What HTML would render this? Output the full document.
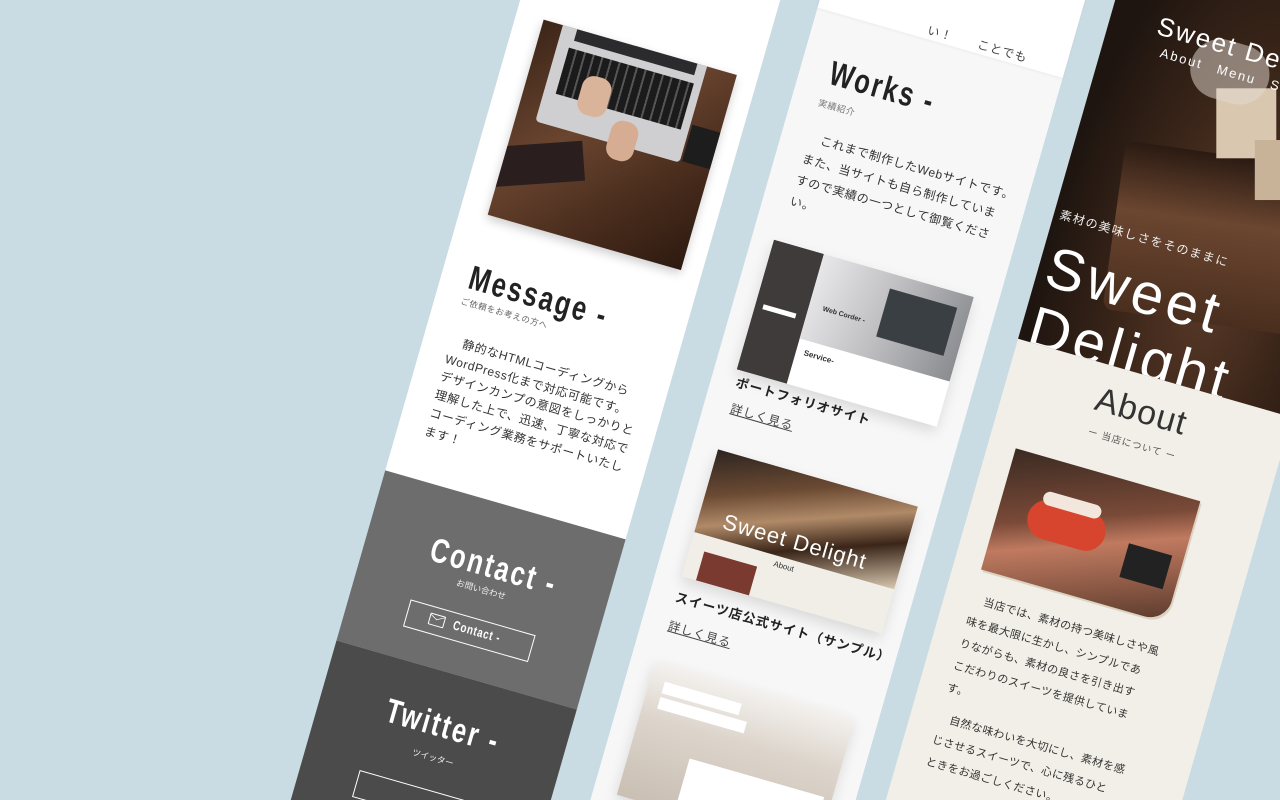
<!DOCTYPE html>
<html><head><meta charset="utf-8">
<style>
html,body{margin:0;padding:0;width:1280px;height:800px;overflow:hidden}
body{background:#c9dbe3;position:relative;font-family:"Liberation Sans","Noto Sans CJK JP",sans-serif}
#clip{position:absolute;left:0;top:0;width:1280px;height:800px;overflow:hidden}
#w{position:absolute;left:0;top:0;width:0;height:0;transform:rotate(16deg);transform-origin:0 0}
#w div,#w span{position:absolute;white-space:nowrap}
.h{font-family:"Liberation Sans Narrow","Liberation Sans",sans-serif;font-size:34px;letter-spacing:3px;line-height:1;transform:scaleX(.75);transform-origin:0 0;font-weight:bold}
.hc{transform-origin:50% 0}
.p{font-size:12px;line-height:18.7px;letter-spacing:.6px;color:#333}
.c{text-align:center}
</style></head><body>
<div id="clip">
<div id="w">
 <!-- strip 1 -->
 <div style="left:500px;top:-500px;width:250px;height:846px;background:#fff"></div>
 <div style="left:500px;top:-500px;width:250px;height:285px;background:#fafafa"></div>
 <div style="left:500px;top:346px;width:250px;height:177px;background:#6d6d6d"></div>
 <div style="left:500px;top:523px;width:250px;height:400px;background:#4b4b4b"></div>
 <div style="left:528px;top:-131px;width:201px;height:203px;background:linear-gradient(135deg,#3c2518,#6a4530 40%,#4a2d1d 70%,#2d1a10);box-shadow:0 4px 10px rgba(0,0,0,.2);overflow:hidden">
  <div style="left:20px;top:-10px;width:150px;height:110px;background:#cfcfd1;border-radius:4px"></div>
  <div style="left:35px;top:-10px;width:125px;height:22px;background:#2b2b2e"></div>
  <div style="left:32px;top:20px;width:130px;height:48px;background:repeating-linear-gradient(90deg,#1b1b1b 0 7px,#555 7px 9px)"></div>
  <div style="left:55px;top:40px;width:30px;height:40px;background:#d9b49a;border-radius:12px"></div>
  <div style="left:95px;top:75px;width:28px;height:40px;background:#d6ad93;border-radius:12px"></div>
  <div style="left:-10px;top:120px;width:90px;height:40px;background:#2a1e1e;transform:rotate(-20deg)"></div>
  <div style="left:172px;top:60px;width:30px;height:38px;background:#1d1d1d"></div>
 </div>
 <div class="h" style="left:528px;top:120px;color:#222">Message -</div>
 <div style="left:526px;top:156px;font-size:8.5px;color:#666;letter-spacing:.5px">ご依頼をお考えの方へ</div>
 <div class="p" style="left:527px;top:194px">　静的なHTMLコーディングから<br>WordPress化まで対応可能です。<br>デザインカンプの意図をしっかりと<br>理解した上で、迅速、丁寧な対応で<br>コーディング業務をサポートいたし<br>ます！</div>
 <div class="h c hc" style="left:500px;top:392px;width:262px;color:#fff">Contact -</div>
 <div class="c" style="left:500px;top:428px;width:250px;font-size:8.5px;color:#eee">お問い合わせ</div>
 <div style="left:560px;top:463px;width:128px;height:26px;border:1px solid #fff"></div>
 <div style="left:583px;top:470px;width:14px;height:10px;border:1.5px solid #fff;border-radius:1px"></div>
 <div style="left:585px;top:466px;width:10px;height:10px;border-right:1.5px solid #fff;border-bottom:1.5px solid #fff;transform:scaleY(.55) rotate(45deg)"></div>
 <div class="h" style="left:608px;top:469px;font-size:13px;letter-spacing:1px;color:#fff">Contact -</div>
 <div class="h c hc" style="left:495px;top:559px;width:262px;color:#fff">Twitter -</div>
 <div class="c" style="left:500px;top:603px;width:250px;font-size:8.5px;color:#eee">ツイッター</div>
 <div style="left:558px;top:641px;width:128px;height:26px;border:1px solid #fff"></div>
 <!-- strip 2 -->
 <div style="left:788px;top:-500px;width:255px;height:1400px;background:#f7f7f7"></div>
 <div style="left:788px;top:-500px;width:255px;height:282px;background:#fff;box-shadow:0 1px 3px rgba(0,0,0,.05)"></div>
 <div style="left:900px;top:-236px;font-size:12px;color:#444;letter-spacing:1px">い！　　ことでも</div>
 <div class="h" style="left:818px;top:-176px;color:#222">Works -</div>
 <div style="left:815px;top:-134px;font-size:9px;color:#777;letter-spacing:.5px">実績紹介</div>
 <div class="p" style="left:815px;top:-102px;font-size:12px;line-height:22px">　これまで制作したWebサイトです。<br>また、当サイトも自ら制作していま<br>すので実績の一つとして御覧くださ<br>い。</div>
 <div style="left:810px;top:17px;width:208px;height:135px;background:#fff;box-shadow:0 6px 14px rgba(0,0,0,.12);overflow:hidden">
  <div style="left:0;top:0;width:52px;height:135px;background:#3e3b3a"></div>
  <div style="left:52px;top:0;width:156px;height:88px;background:linear-gradient(100deg,#e8e8ea,#bdbdc0 50%,#8a8c90)"></div>
  <div style="left:125px;top:15px;width:70px;height:50px;background:#3a3f44"></div>
  <div style="left:66px;top:50px;font-size:7px;font-weight:bold;color:#333">Web Corder -</div>
  <div style="left:60px;top:96px;font-size:8px;font-weight:bold;color:#333">Service-</div>
  <div style="left:8px;top:65px;width:34px;height:5px;background:#fff"></div>
 </div>
 <div style="left:813px;top:154px;font-size:13px;font-weight:bold;color:#222;letter-spacing:1px">ポートフォリオサイト</div>
 <div style="left:815px;top:182px;font-size:12px;color:#444;text-decoration:underline;letter-spacing:1px">詳しく見る</div>
 <div style="left:814px;top:234px;width:208px;height:132px;background:#f0eee7;box-shadow:0 6px 14px rgba(0,0,0,.12);overflow:hidden">
  <div style="left:0;top:0;width:208px;height:86px;background:linear-gradient(160deg,#2c2420,#6b4a33 30%,#b08a68 50%,#3a2518 70%,#d8c8b0)"></div>
  <div style="left:25px;top:55px;font-size:22px;color:#fff;letter-spacing:1px">Sweet Delight</div>
  <div style="left:85px;top:90px;font-size:8px;color:#333">About</div>
  <div style="left:15px;top:102px;width:55px;height:30px;background:#7a3a30"></div>
 </div>
 <div style="left:814px;top:377px;font-size:13px;font-weight:bold;color:#222;letter-spacing:1px">スイーツ店公式サイト（サンプル）</div>
 <div style="left:815px;top:408px;font-size:12px;color:#444;text-decoration:underline;letter-spacing:1px">詳しく見る</div>
 <div style="left:812px;top:454px;width:208px;height:140px;background:linear-gradient(180deg,#f4f2ef,#ddd5cc 40%,#c9bfb3);box-shadow:0 6px 14px rgba(0,0,0,.12);overflow:hidden">
  <div style="left:15px;top:18px;width:80px;height:12px;background:#fff"></div>
  <div style="left:15px;top:34px;width:90px;height:12px;background:#fff"></div>
  <div style="left:60px;top:85px;width:140px;height:50px;background:#fff"></div>
 </div>
 <!-- strip 3 -->
 <div style="left:1072px;top:-500px;width:285px;height:1400px;background:#f1efe7"></div>
 <div style="left:1072px;top:-500px;width:285px;height:545px;overflow:hidden;background:radial-gradient(ellipse at 60% 78%,#5a3a28 0,#3a2519 35%,#1e1510 70%)">
  <div style="left:60px;top:310px;width:200px;height:170px;background:linear-gradient(180deg,#2a1a12,#6b4630 40%,#4a2e1e);border-radius:10px;transform:rotate(-8deg)"></div>
  <div style="left:130px;top:240px;width:60px;height:70px;background:#d9c7b0;transform:rotate(-16deg)"></div>
  <div style="left:180px;top:280px;width:55px;height:60px;background:#c8b398;transform:rotate(-16deg)"></div>
  <div style="left:90px;top:200px;width:80px;height:60px;background:rgba(230,220,210,.5);border-radius:40px"></div>
  <div style="left:48px;top:190px;font-size:26px;color:#fff;letter-spacing:2px">Sweet Delight</div>
  <div style="left:58px;top:220px;font-size:13px;color:#fff;letter-spacing:2px">About　Menu　Shop</div>
  <div style="left:6px;top:405px;font-size:12px;color:#eee;letter-spacing:1.5px">素材の美味しさをそのままに</div>
  <div style="left:8px;top:436px;font-size:58px;line-height:62px;color:#fff;letter-spacing:4px">Sweet<br>Delight</div>
 </div>
 <div class="c" style="left:1068px;top:62px;width:285px;font-size:34px;color:#333;letter-spacing:1px">About</div>
 <div class="c" style="left:1068px;top:107px;width:285px;font-size:9.5px;color:#555;letter-spacing:1px">ー 当店について ー</div>
 <div style="left:1100px;top:151px;width:192px;height:126px;border-radius:0 0 22px 0;overflow:hidden;background:linear-gradient(160deg,#3a2a22,#7a4a38 40%,#c07a60 55%,#5a3a2c);box-shadow:2px 2px 0 #ddd3c2">
  <div style="left:30px;top:40px;width:80px;height:40px;background:#d8452e;border-radius:20px"></div>
  <div style="left:40px;top:32px;width:60px;height:14px;background:#f3e7dd;border-radius:7px"></div>
  <div style="left:135px;top:60px;width:45px;height:35px;background:#222"></div>
 </div>
 <div class="p" style="left:1100px;top:297px;font-size:11px;line-height:23px;letter-spacing:.4px">　当店では、素材の持つ美味しさや風<br>味を最大限に生かし、シンプルであ<br>りながらも、素材の良さを引き出す<br>こだわりのスイーツを提供していま<br>す。</div>
 <div class="p" style="left:1100px;top:420px;font-size:11px;line-height:23px;letter-spacing:.4px">　自然な味わいを大切にし、素材を感<br>じさせるスイーツで、心に残るひと<br>ときをお過ごしください。</div>
</div>
</div>
</body></html>
